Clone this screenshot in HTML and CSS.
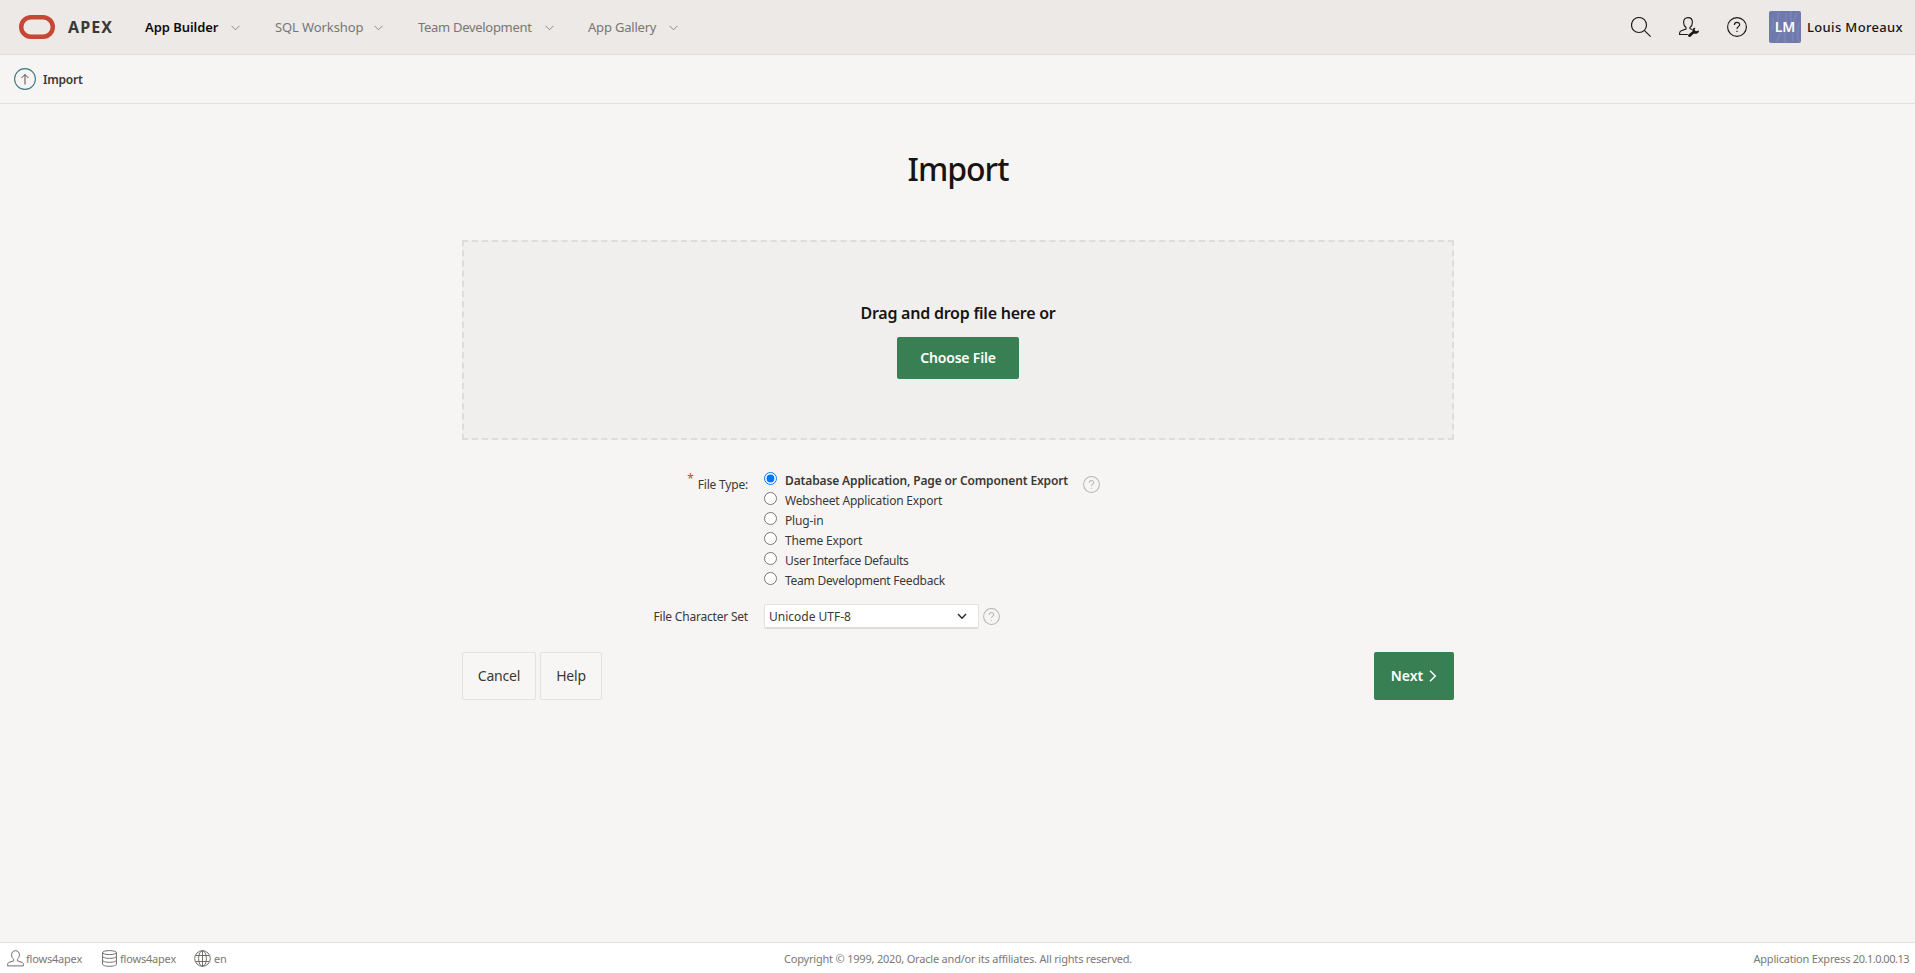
FILE: index.html
```html
<!DOCTYPE html>
<html lang="en">
<head>
<meta charset="utf-8">
<title>Import</title>
<link rel="stylesheet" href="styles.css">
</head>
<body>
<header class="header">
  <a class="brand">
    <svg width="36" height="24" viewBox="0 0 36 24"><rect x="2.2" y="2.2" width="31.6" height="19.6" rx="9.8" fill="none" stroke="#c74634" stroke-width="4.4"/></svg>
    <span class="brand-name">APEX</span>
  </a>
  <nav class="nav">
    <a class="nav-item nav-builder">App Builder</a><svg class="chevron" viewBox="0 0 9 6"><path d="M.5 .8 4.5 4.8 8.5 .8"/></svg>
    <a class="nav-item nav-sql">SQL Workshop</a><svg class="chevron" viewBox="0 0 9 6"><path d="M.5 .8 4.5 4.8 8.5 .8"/></svg>
    <a class="nav-item nav-team">Team Development</a><svg class="chevron" viewBox="0 0 9 6"><path d="M.5 .8 4.5 4.8 8.5 .8"/></svg>
    <a class="nav-item nav-gallery">App Gallery</a><svg class="chevron" viewBox="0 0 9 6"><path d="M.5 .8 4.5 4.8 8.5 .8"/></svg>
  </nav>
  <div class="tools">
    <svg class="tool" viewBox="0 0 20 20"><circle cx="8" cy="8" r="7.5"/><path d="M13.3 13.3 19.6 19.6"/></svg>
    <svg class="tool" viewBox="0 0 20 20"><path d="M9 .6C6.300.6 4.600 2.600 4.600 5.200c0 2.300 1 4.300 2.400 5.300v1.500L2.300 13.800C1.200 14.300.6 15 .6 16.300v1.200h8.200M9 .6c2.700 0 4.400 2 4.400 4.600 0 2.300-1 4.300-2.400 5.300v1.200l2 .8"/><path class="solid" d="M9.300 17.800 13.500 14.200C13 12.200 14.300 10.500 16.400 10.700L15.600 13l1.300 1.300 3-.9c.3 2-1.400 3.600-3.400 3.300l-1.900.1-3.200 2.900c-1.200 1-3.100-.6-2.100-1.900z"/></svg>
    <svg class="tool" viewBox="0 0 20 20"><circle cx="10" cy="10" r="9.400"/><path d="M7.400 8C7.400 4.500 12.700 4.700 12.700 7.600c0 2-2.700 2-2.700 4.300M10 13.800v1.300"/></svg>
  </div>
  <div class="account">
    <span class="avatar">
      <svg class="avatar-pattern" viewBox="0 0 32 32"><path d="M3 6q3 5 0 13M10 1q-3 10 2 18-1 6-5 12M17 2q1 8-1 13M22 0q-1 10 1 18M28 2q-6 10-4 28M17 20q-3 6 0 12M30 12q-3 9 0 19"/></svg>
      <span class="initials">LM</span>
    </span>
    <span class="user-name">Louis Moreaux</span>
  </div>
</header>
<div class="crumbs">
  <svg width="22" height="22" viewBox="0 0 22 22"><circle cx="11" cy="11" r="10.400" fill="none" stroke="#3e7b85" stroke-width="1.100"/><path d="M11 16.500V6.500M7.500 10 11 6.500 14.500 10" fill="none" stroke="#55504b"/></svg>
  <span class="crumb">Import</span>
</div>
<main class="main">
  <h1 class="title"><span>Import</span></h1>
  <section class="dropzone">
    <div class="drop-text">Drag and drop file here or</div>
    <button class="btn btn-hot choose"><span>Choose File</span></button>
  </section>
  <section class="form">
    <div class="row">
      <div class="label type-label"><span class="required">*</span><span class="type-text">File Type:</span></div>
      <div class="radios">
        <label class="option"><input type="radio" name="type" checked><span class="o1">Database Application, Page or Component Export</span></label>
        <label class="option"><input type="radio" name="type"><span class="o2">Websheet Application Export</span></label>
        <label class="option"><input type="radio" name="type"><span class="o3">Plug-in</span></label>
        <label class="option"><input type="radio" name="type"><span class="o4">Theme Export</span></label>
        <label class="option"><input type="radio" name="type"><span class="o5">User Interface Defaults</span></label>
        <label class="option"><input type="radio" name="type"><span class="o6">Team Development Feedback</span></label>
      </div>
      <svg class="hint hint-type" viewBox="0 0 20 20"><circle cx="10" cy="10" r="9.300"/><path d="M7.400 8C7.400 4.500 12.700 4.700 12.700 7.600c0 2-2.700 2-2.700 4.300M10 13.800v1.300"/></svg>
    </div>
    <div class="row charset-row">
      <div class="label charset-label"><span>File Character Set</span></div>
      <div class="select"><span>Unicode UTF-8</span><svg width="10" height="7" viewBox="0 0 10 7"><path d="M1 1 5 5.200 9 1" fill="none" stroke="#2b2926" stroke-width="1.400"/></svg></div>
      <svg class="hint" viewBox="0 0 20 20"><circle cx="10" cy="10" r="9.300"/><path d="M7.400 8C7.400 4.500 12.700 4.700 12.700 7.600c0 2-2.700 2-2.700 4.300M10 13.800v1.300"/></svg>
    </div>
  </section>
  <div class="actions">
    <button class="btn cancel"><span>Cancel</span></button>
    <button class="btn help"><span>Help</span></button>
    <button class="btn btn-hot next"><span>Next</span><svg width="8" height="12" viewBox="0 0 8 12"><path d="M1 .8 6.300 6 1 11.200" fill="none" stroke="#fff" stroke-width="1.400"/></svg></button>
  </div>
</main>
<footer class="footer">
  <div class="foot-left">
    <svg class="fi-user" width="17" height="17" viewBox="0 0 17 17"><path d="M8.500.7C6.200.7 4.600 2.300 4.600 4.800c0 2 .9 3.700 2.100 4.600v1.400L2 12.400C1 12.800.6 13.600.6 14.600v1.300h15.800v-1.300c0-1-.4-1.800-1.400-2.200l-4.700-1.600V9.400c1.200-.9 2.100-2.600 2.100-4.600C12.400 2.300 10.800.7 8.500.7z"/></svg>
    <span class="f1">flows4apex</span>
    <svg class="fi-db" width="15" height="17" viewBox="0 0 15 17"><ellipse cx="7.500" cy="2.600" rx="6.900" ry="2"/><path d="M.6 2.600v11.600c0 1.200 3 2.100 6.900 2.100s6.900-.9 6.900-2.100V2.600M.6 6.300c0 1.200 3 2.100 6.900 2.100s6.900-.9 6.900-2.100M.6 10.200c0 1.200 3 2.100 6.900 2.100s6.900-.9 6.900-2.100"/></svg>
    <span class="f1">flows4apex</span>
    <svg class="fi-globe" width="17" height="17" viewBox="0 0 17 17"><circle cx="8.500" cy="8.500" r="7.800"/><ellipse cx="8.500" cy="8.500" rx="3.900" ry="7.800"/><path d="M8.500.7v15.600M1.600 5.500h13.800M1.600 11.500h13.800"/></svg>
    <span class="f3">en</span>
  </div>
  <div class="foot-center">Copyright © 1999, 2020, Oracle and/or its affiliates. All rights reserved.</div>
  <div class="foot-right">Application Express <span class="version">20.1.0.00.13</span></div>
</footer>
</body>
</html>
```
FILE: styles.css
```css
* { box-sizing: border-box; }
body {
  margin: 0;
  height: 973px;
  display: flex;
  flex-direction: column;
  background: #f6f5f3;
  color: #3c3835;
  font: 12px/20px "Noto Sans", "Open Sans", sans-serif;
  white-space: nowrap;
  overflow: hidden;
}
svg { display: block; flex: none; }
button { font: inherit; color: inherit; }

.header {
  display: flex;
  align-items: center;
  height: 55px;
  padding: 0 11px 1px 19px;
  background: #ece9e6;
  border-bottom: 1px solid #e0dedb;
}
.brand { display: flex; align-items: center; gap: 13px; width: 126px; }
.brand-name { font-size: 16px; font-weight: 700; letter-spacing: 1.1px; }
.nav { display: flex; align-items: center; font-size: 13px; color: #7a7673; }
.nav-builder { width: 86px; color: #0f0d0c; font-weight: 600; letter-spacing: -.05px; }
.nav-sql { width: 100px; padding-left: 1px; letter-spacing: -.1px; }
.nav-team { width: 128px; padding-left: 1px; letter-spacing: -.3px; }
.nav-gallery { width: 81px; letter-spacing: -.2px; }
.chevron { width: 9px; height: 6px; margin: 2px 34px 0 0; fill: none; stroke: #8c8885; }
.tools { display: flex; gap: 28px; margin-left: auto; }
.tool { width: 20px; height: 20px; fill: none; stroke: #1b1918; stroke-width: 1.15; }
.tool .solid { fill: #1b1918; stroke: none; }
.account { display: flex; align-items: center; margin-left: 22px; }
.avatar {
  display: grid;
  place-items: center;
  width: 32px;
  height: 32px;
  border-radius: 2px;
  background: #6f79ac;
  overflow: hidden;
}
.avatar-pattern { grid-area: 1 / 1; width: 32px; height: 32px; fill: none; stroke: #7a83b8; stroke-width: 2; }
.initials { grid-area: 1 / 1; color: #fff; font-size: 14px; font-weight: 600; }
.user-name { width: 97px; margin-left: 6px; color: #161413; font-size: 13px; font-weight: 500; letter-spacing: .35px; }

.crumbs {
  display: flex;
  align-items: center;
  gap: 7px;
  height: 49px;
  padding: 0 14px;
  border-bottom: 1px solid #e3e1df;
}
.crumb { padding-top: 2px; font-weight: 600; letter-spacing: -.2px; }

.main { width: 992px; margin: 0 0 0 462px; flex: 1; }
.title {
  height: 136px;
  margin: 0;
  padding-top: 43px;
  color: #161513;
  font-size: 32px;
  line-height: 44px;
  font-weight: 500;
  letter-spacing: -1px;
  text-align: center;
}
.dropzone {
  display: flex;
  flex-direction: column;
  align-items: center;
  height: 200px;
  padding-top: 59px;
  border: 2px dashed #dddcda;
  background: #f0efed;
}
.drop-text { color: #161513; font-size: 16px; line-height: 24px; font-weight: 600; letter-spacing: -.24px; }
.btn { display: flex; align-items: center; justify-content: center; padding: 0; border: 1px solid #e4e2e0; border-radius: 2px; background: #f7f6f4; }
.btn-hot { border: 0; background: #388054; color: #fff; font-weight: 600; }
.choose { width: 122px; height: 42px; margin-top: 12px; font-size: 14px; letter-spacing: -.2px; }

.form { padding-top: 31px; }
.row { display: flex; }
.label { display: flex; justify-content: flex-end; width: 286px; margin-right: 16px; letter-spacing: -.2px; }
.type-label { padding-top: 4px; height: 24px; }
.required { margin: -6px 4px 0 0; color: #c74634; font-size: 12px; }
.radios { width: 319px; }
.option { display: flex; height: 20px; }
.option input { width: 13px; height: 13px; margin: 1px 8px 0 0; }
.option span { line-height: 20px; }
.option .o1 { font-weight: 600; letter-spacing: -.13px; }
.o2 { letter-spacing: -.2px; }
.o3, .o4 { letter-spacing: -.15px; }
.o5 { letter-spacing: -.3px; }
.o6 { letter-spacing: -.24px; }
.hint { width: 17px; height: 17px; margin-top: 4px; fill: none; stroke: #b8b5b2; stroke-width: 1.2; }
.hint-type { margin: 5px 0 0; }
.charset-row { margin-top: 13px; }
.charset-label { padding-top: 3px; }
.select {
  display: flex;
  align-items: center;
  justify-content: space-between;
  width: 215px;
  height: 25px;
  margin-right: 4px;
  padding: 0 11px 0 4px;
  border: 1px solid #e4e2e0;
  border-bottom: 2px solid #dedcd9;
  border-radius: 2px;
  background: #fff;
}
.select span { padding-top: 2px; }
.actions { display: flex; gap: 4px; margin-top: 23px; font-size: 14px; }
.actions .btn { height: 48px; }
.cancel { width: 74px; letter-spacing: -.2px; }
.help { width: 62px; letter-spacing: -.2px; }
.next { width: 80px; margin-left: auto; gap: 6px; }

.footer {
  display: flex;
  align-items: center;
  height: 31px;
  padding-right: 6px;
  border-top: 1px solid #e5e1dd;
  background: #fff;
  color: #7c7875;
  font-size: 11px;
  letter-spacing: -.2px;
}
.foot-left { display: flex; align-items: center; width: 784px; padding: 1px 0 0 7px; }
.foot-left svg { fill: none; stroke: #716d6a; }
.foot-left span, .foot-center, .foot-right { padding-top: 1px; }
.foot-right { margin-left: auto; }
.version { letter-spacing: -.5px; }
.fi-user { margin-right: 2px; }
.fi-db { margin-right: 3px; }
.fi-globe { margin: 0 3px 0 -2px; }
.f1 { width: 76px; }
```
